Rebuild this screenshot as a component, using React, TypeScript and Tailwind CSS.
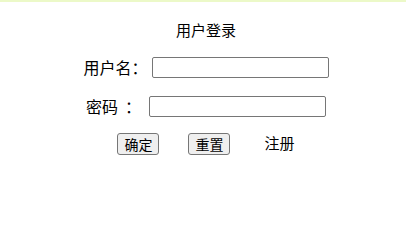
import React from 'react';

const inputCls =
  'h-[21px] w-[177px] rounded-[2px] border border-[#767676] bg-white px-1 text-[13px] outline-none';
const btnCls =
  'flex h-[22px] w-[42px] items-center justify-center rounded-[3px] border border-[#767676] bg-[#efefef] text-[14px] leading-none text-black';

const App: React.FC = () => {
  return (
    <div
      className="h-[212px] w-[406px] bg-white text-black"
      style={{ fontFamily: '"Microsoft YaHei", "Noto Sans CJK SC", "Liberation Sans", sans-serif' }}
    >
      <div className="h-[2px] bg-[#ecf9c8]" />
      <div className="flex flex-col items-center pl-[6px] pt-[18px]">
        <h1 className="h-[20px] text-[15px] leading-[20px]">用户登录</h1>

        <div className="mt-[17px] flex h-[21px] items-center">
          <label className="text-[16px] leading-[21px]">用户名：</label>
          <input type="text" className={`ml-[4px] ${inputCls}`} />
        </div>

        <div className="mt-[18px] flex h-[21px] items-center">
          <label className="text-[16px] leading-[21px]">密码&nbsp;&nbsp;：</label>
          <input type="password" className={`ml-[8px] ${inputCls}`} />
        </div>

        <div className="mt-[15px] flex h-[23px] items-center">
          <button className={btnCls}>确定</button>
          <button className={`ml-[29px] ${btnCls}`}>重置</button>
          <span className="ml-[34px] text-[15px]">注册</span>
        </div>
      </div>
    </div>
  );
};

export default App;
